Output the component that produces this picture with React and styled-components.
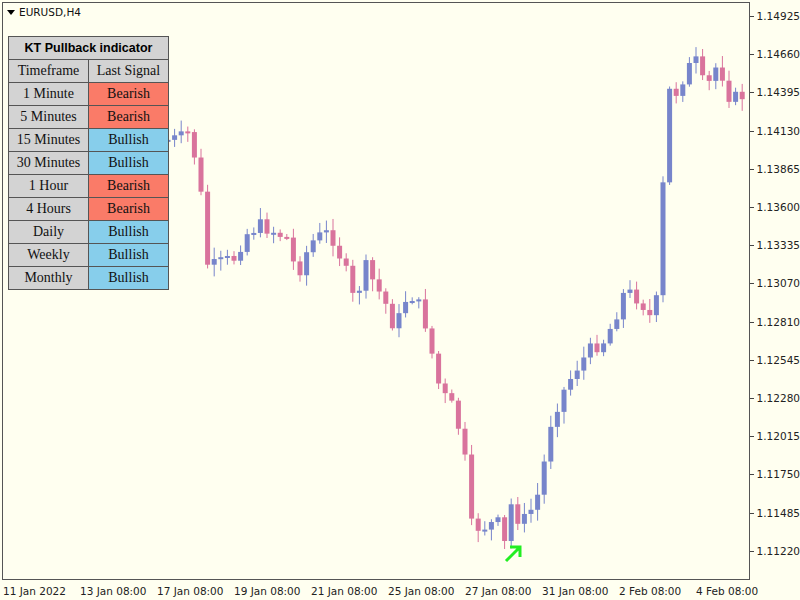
import React from "react";
import styled, { createGlobalStyle } from "styled-components";

const G = createGlobalStyle`
  body{margin:0;background:#fffff0;font-family:"DejaVu Sans",sans-serif;}
`;
const Page = styled.div`width:800px;height:600px;background:#fffff0;display:flex;flex-direction:column;overflow:hidden;`;
const Top = styled.div`display:flex;height:581px;`;
const Chart = styled.div`position:relative;width:747px;height:578px;margin:2px 0 0 2px;border-left:1px solid #555;border-top:1px solid #555;border-right:1px solid #555;border-bottom:1px solid #555;box-sizing:border-box;width:748px;`;
const Axis = styled.div`display:flex;flex-direction:column;padding-top:8px;padding-left:7px;`;
const Price = styled.div`height:39.25px;font-size:10.5px;color:#222;display:flex;align-items:flex-start;gap:3px;line-height:17px;&::before{content:"";width:4px;height:1px;background:#444;margin:8px 0 0 -7px;}`;
const Times = styled.div`display:flex;padding-left:3px;height:19px;align-items:center;`;
const Time = styled.div`width:77px;font-size:10.5px;color:#222;flex:none;`;
const Title = styled.div`position:absolute;left:4px;top:3px;font-size:10.5px;color:#111;display:flex;align-items:center;gap:4px;`;
const Tri = styled.span`width:0;height:0;border-left:4px solid transparent;border-right:4px solid transparent;border-top:5px solid #000;`;
const Table = styled.div`position:absolute;left:5px;top:33px;display:grid;grid-template-columns:79px 79px;background:#555;gap:1px;border:1px solid #555;`;
const Head = styled.div`grid-column:1 / 3;height:22px;background:#d3d3d3;font-family:"Liberation Sans",sans-serif;font-weight:bold;font-size:12.5px;display:flex;align-items:center;justify-content:center;`;
const Cell = styled.div`height:22px;background:${p=>p.$c||"#d3d3d3"};font-family:"Liberation Serif",serif;font-size:14px;display:flex;align-items:center;justify-content:center;color:#111;`;

const pts=[[168,140],[180,138],[190,132],[200,185],[208,268],[222,262],[235,258],[245,235],[260,225],[275,232],[290,240],[296,280],[305,255],[315,238],[330,232],[345,268],[355,305],[365,265],[375,285],[385,302],[395,330],[405,300],[415,295],[425,322],[440,390],[455,410],[465,460],[470,525],[480,528],[490,525],[497,520],[505,545],[512,500],[520,525],[530,512],[540,490],[550,425],[560,398],[575,370],[590,350],[605,340],[615,318],[625,290],[640,300],[655,325],[662,205],[668,90],[675,95],[688,68],[698,60],[706,98],[712,70],[720,65],[727,95],[737,98],[745,95]];
function yAt(x){for(let i=1;i<pts.length;i++){if(x<=pts[i][0]){const a=pts[i-1],b=pts[i];const t=(x-a[0])/(b[0]-a[0]);return a[1]+(b[1]-a[1])*t;}}return pts[pts.length-1][1];}
const candles=[];let prev=yAt(164);let s=7;const rnd=()=>{s=(s*9301+49297)%233280;return s/233280;};
for(let x=168;x<=746;x+=6.6){const c=yAt(x)+(rnd()-0.5)*14;const o=prev;const hi=Math.min(o,c)-2-rnd()*10;const lo=Math.max(o,c)+2+rnd()*10;candles.push({x,o,c,hi,lo});prev=c;}

const prices=["1.14925","1.14660","1.14395","1.14130","1.13865","1.13600","1.13335","1.13070","1.12810","1.12545","1.12280","1.12015","1.11750","1.11485","1.11220"];
const times=["11 Jan 2022","13 Jan 08:00","17 Jan 08:00","19 Jan 08:00","21 Jan 08:00","25 Jan 08:00","27 Jan 08:00","31 Jan 08:00","2 Feb 08:00","4 Feb 08:00"];
const rows=[["1 Minute",0],["5 Minutes",0],["15 Minutes",1],["30 Minutes",1],["1 Hour",0],["4 Hours",0],["Daily",1],["Weekly",1],["Monthly",1]];

export default function App(){
  return <Page><G/>
    <Top>
      <Chart>
        <svg width="746" height="576" style={{position:"absolute",left:-3,top:-3}}>
          {candles.map((k,i)=>{const bull=k.c<k.o;const col=bull?"#7785cb":"#d9739c";return <g key={i}>
            <line x1={k.x} x2={k.x} y1={k.hi} y2={k.lo} stroke={col} strokeWidth="1"/>
            <rect x={k.x-2.5} width="5" y={Math.min(k.o,k.c)} height={Math.max(2,Math.abs(k.c-k.o))} fill={col}/>
          </g>;})}
          <path d="M506 561 L520 547 M510 547 L520 547 L520 557" stroke="#22ee22" strokeWidth="3" fill="none"/>
        </svg>
        <Title><Tri/>EURUSD,H4</Title>
        <Table>
          <Head>KT Pullback indicator</Head>
          <Cell>Timeframe</Cell><Cell>Last Signal</Cell>
          {rows.map(([n,b])=><React.Fragment key={n}><Cell>{n}</Cell><Cell $c={b?"#87ceeb":"#fa7b68"}>{b?"Bullish":"Bearish"}</Cell></React.Fragment>)}
        </Table>
      </Chart>
      <Axis>{prices.map(p=><Price key={p}>{p}</Price>)}</Axis>
    </Top>
    <Times>{times.map(t=><Time key={t}>{t}</Time>)}</Times>
  </Page>;
}
